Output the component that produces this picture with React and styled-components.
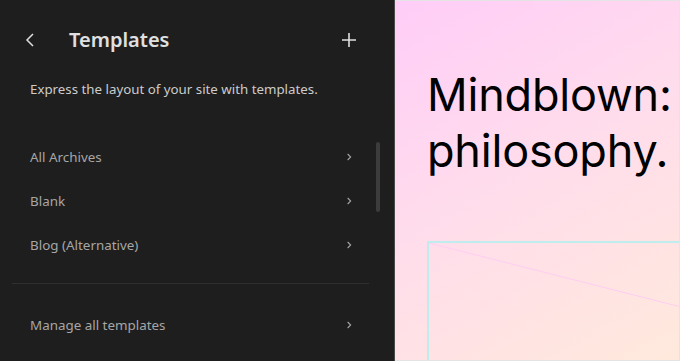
import React from 'react';
import styled, { createGlobalStyle } from 'styled-components';

const GlobalStyle = createGlobalStyle`
  html, body {
    margin: 0;
    padding: 0;
    background: #1e1e1e;
  }
  #root {
    width: 680px;
    height: 361px;
    overflow: hidden;
  }
`;

const Page = styled.div`
  display: flex;
  width: 680px;
  height: 361px;
`;

const Sidebar = styled.aside`
  width: 394px;
  flex-shrink: 0;
  background: #1e1e1e;
  border-right: 1px solid #4a4a4a;
  font-family: "Noto Sans", "Open Sans", sans-serif;
  display: flex;
  flex-direction: column;
`;

const Header = styled.div`
  display: flex;
  align-items: center;
  height: 32px;
  padding: 24px 33px 0 19px;
`;

const IconButton = styled.button`
  width: 24px;
  height: 24px;
  padding: 0;
  border: 0;
  background: none;
  color: ${p => p.$color || '#e0e0e0'};
  display: flex;
  align-items: center;
  justify-content: center;
  flex-shrink: 0;
`;

const Title = styled.h2`
  flex: 1;
  margin: 0 0 0 26px;
  font-size: 20px;
  font-weight: 600;
  color: #e0e0e0;
  line-height: 32px;
`;

const Description = styled.p`
  margin: 23px 0 0 30px;
  font-size: 13.3px;
  line-height: 20px;
  color: #cccccc;
`;

const List = styled.div`
  position: relative;
  margin-top: 36px;
`;

const Row = styled.div`
  display: flex;
  align-items: center;
  height: 44px;
  padding: 0 33px 0 30px;
  font-size: 13.4px;
  color: #a6a6a6;
`;

const RowLabel = styled.span`
  flex: 1;
`;

const ScrollThumb = styled.div`
  position: absolute;
  left: 376px;
  top: 7px;
  width: 4px;
  height: 70px;
  border-radius: 2px;
  background: #3c3c3c;
`;

const Divider = styled.hr`
  margin: 16px 25px 0 12px;
  border: 0;
  border-top: 1px solid #2f2f2f;
`;

const Footer = styled.div`
  margin-top: 19px;
`;

const Canvas = styled.main`
  flex: 1;
  position: relative;
  border-top: 1px solid #e4e4e4;
  border-bottom: 1px solid #e4e4e4;
  border-right: 1px solid #e4e4e4;
  background: linear-gradient(150deg, #ffcdf8 0%, #ffdcec 45%, #ffe9dc 100%);
  overflow: hidden;
  font-family: Inter, "Liberation Sans", sans-serif;
  padding: 66px 0 0 32px;
  box-sizing: border-box;
`;

const Heading = styled.h1`
  margin: 0;
  font-size: 45px;
  font-weight: 400;
  line-height: 56px;
  color: #000;
  white-space: nowrap;
  letter-spacing: -0.2px;
`;

const CoverBlock = styled.div`
  margin-top: 62px;
  height: 140px;
  border-top: 2px solid #bdeeed;
  border-left: 2px solid #bdeeed;
  position: relative;
`;

const Chevron = ({ dir = 'right', size = 16 }) => (
  <svg width={size} height={size} viewBox="0 0 24 24" fill="none">
    {dir === 'right' ? (
      <path d="M10 7.5l4.5 4.5-4.5 4.5" stroke="currentColor" strokeWidth="1.6" />
    ) : (
      <path d="M14 6l-6 6 6 6" stroke="currentColor" strokeWidth="1.5" />
    )}
  </svg>
);

const Plus = () => (
  <svg width="24" height="24" viewBox="0 0 24 24" fill="none">
    <path d="M12 5v14M5 12h14" stroke="currentColor" strokeWidth="1.6" />
  </svg>
);

const templates = ['All Archives', 'Blank', 'Blog (Alternative)'];

export default function App() {
  return (
    <>
      <GlobalStyle />
      <Page>
        <Sidebar>
          <Header>
            <IconButton><Chevron dir="left" size={24} /></IconButton>
            <Title>Templates</Title>
            <IconButton><Plus /></IconButton>
          </Header>
          <Description>Express the layout of your site with templates.</Description>
          <List>
            {templates.map(t => (
              <Row key={t}>
                <RowLabel>{t}</RowLabel>
                <IconButton $color="#a6a6a6"><Chevron /></IconButton>
              </Row>
            ))}
            <ScrollThumb />
          </List>
          <Divider />
          <Footer>
            <Row>
              <RowLabel>Manage all templates</RowLabel>
              <IconButton $color="#a6a6a6"><Chevron /></IconButton>
            </Row>
          </Footer>
        </Sidebar>
        <Canvas>
          <Heading>Mindblown:<br />philosophy.</Heading>
          <CoverBlock>
            <svg width="260" height="80" style={{ position: 'absolute', left: 0, top: 0 }}>
              <line x1="0" y1="0" x2="260" y2="66" stroke="#ffcdf3" strokeWidth="1" />
            </svg>
          </CoverBlock>
        </Canvas>
      </Page>
    </>
  );
}
